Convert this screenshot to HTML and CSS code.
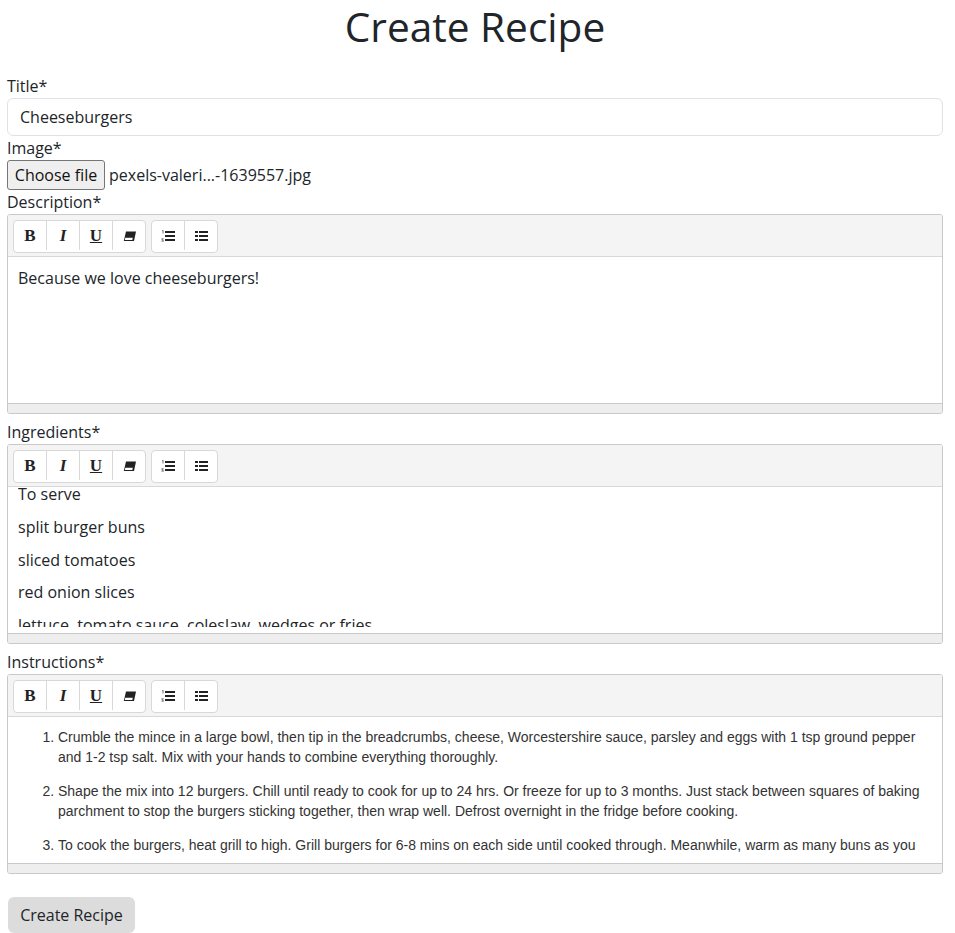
FILE: index.html
```html
<!DOCTYPE html>
<html>

<head>
    <title>Create Recipe</title>
    <link rel="stylesheet" href="styles.css">
</head>

<body>
    <h1>Create Recipe</h1>
    <form class="recipe-form">
        <label for="title">Title*</label>
        <input type="text" id="title" class="text-input" value="Cheeseburgers">

        <label>Image*</label>
        <div class="file-row">
            <button type="button" class="file-button">Choose file</button>
            <span class="file-name">pexels-valeri...-1639557.jpg</span>
        </div>

        <label>Description*</label>
        <div class="editor">
            <div class="toolbar">
                <div class="btn-group">
                    <button type="button" class="tool tool-b">B</button>
                    <button type="button" class="tool tool-i">I</button>
                    <button type="button" class="tool tool-u">U</button>
                    <button type="button" class="tool"><svg width="14" height="14" viewBox="0 0 14 14"><path d="M4 2.500h10L12 12H1.800z" fill="#222"/><path d="M3.300 8.700h7.500l-.5 2.300H2.800z" fill="#fff"/></svg></button>
                </div>
                <div class="btn-group">
                    <button type="button" class="tool"><svg width="14" height="14" viewBox="0 0 14 14"><path d="M4 2h10v2H4zM4 6h10v2H4zM4 10h10v2H4z" fill="#222"/><path d="M1.200 1h1.200v3.500H1.600V1.800H1.200zM.4 9.500h2.400v.7H1.300l1.500 1.500v.8H.4v-.7h1.400L.4 10.300z" fill="#555"/></svg></button>
                    <button type="button" class="tool"><svg width="14" height="14" viewBox="0 0 14 14"><path d="M5 2h9v2H5zM5 6h9v2H5zM5 10h9v2H5zM1 2h3v2H1zM1 6h3v2H1zM1 10h3v2H1z" fill="#222"/></svg></button>
                </div>
            </div>
            <div class="editor-body desc-body">
                <p>Because we love cheeseburgers!</p>
            </div>
            <div class="statusbar"></div>
        </div>

        <label>Ingredients*</label>
        <div class="editor">
            <div class="toolbar">
                <div class="btn-group">
                    <button type="button" class="tool tool-b">B</button>
                    <button type="button" class="tool tool-i">I</button>
                    <button type="button" class="tool tool-u">U</button>
                    <button type="button" class="tool"><svg width="14" height="14" viewBox="0 0 14 14"><path d="M4 2.500h10L12 12H1.800z" fill="#222"/><path d="M3.300 8.700h7.500l-.5 2.300H2.800z" fill="#fff"/></svg></button>
                </div>
                <div class="btn-group">
                    <button type="button" class="tool"><svg width="14" height="14" viewBox="0 0 14 14"><path d="M4 2h10v2H4zM4 6h10v2H4zM4 10h10v2H4z" fill="#222"/><path d="M1.200 1h1.200v3.500H1.600V1.800H1.200zM.4 9.500h2.400v.7H1.300l1.500 1.500v.8H.4v-.7h1.400L.4 10.300z" fill="#555"/></svg></button>
                    <button type="button" class="tool"><svg width="14" height="14" viewBox="0 0 14 14"><path d="M5 2h9v2H5zM5 6h9v2H5zM5 10h9v2H5zM1 2h3v2H1zM1 6h3v2H1zM1 10h3v2H1z" fill="#222"/></svg></button>
                </div>
            </div>
            <div class="editor-body ingredients-body">
                <div class="scroll-clip">
                    <div class="scrolled">
                        <p>To serve</p>
                        <p>split burger buns</p>
                        <p>sliced tomatoes</p>
                        <p>red onion slices</p>
                        <p>lettuce, tomato sauce, coleslaw, wedges or fries</p>
                    </div>
                </div>
            </div>
            <div class="statusbar"></div>
        </div>

        <label>Instructions*</label>
        <div class="editor">
            <div class="toolbar">
                <div class="btn-group">
                    <button type="button" class="tool tool-b">B</button>
                    <button type="button" class="tool tool-i">I</button>
                    <button type="button" class="tool tool-u">U</button>
                    <button type="button" class="tool"><svg width="14" height="14" viewBox="0 0 14 14"><path d="M4 2.500h10L12 12H1.800z" fill="#222"/><path d="M3.300 8.700h7.500l-.5 2.300H2.800z" fill="#fff"/></svg></button>
                </div>
                <div class="btn-group">
                    <button type="button" class="tool"><svg width="14" height="14" viewBox="0 0 14 14"><path d="M4 2h10v2H4zM4 6h10v2H4zM4 10h10v2H4z" fill="#222"/><path d="M1.200 1h1.200v3.500H1.600V1.800H1.200zM.4 9.500h2.400v.7H1.300l1.500 1.500v.8H.4v-.7h1.400L.4 10.300z" fill="#555"/></svg></button>
                    <button type="button" class="tool"><svg width="14" height="14" viewBox="0 0 14 14"><path d="M5 2h9v2H5zM5 6h9v2H5zM5 10h9v2H5zM1 2h3v2H1zM1 6h3v2H1zM1 10h3v2H1z" fill="#222"/></svg></button>
                </div>
            </div>
            <div class="editor-body steps-body">
                <ol>
                    <li>Crumble the mince in a large bowl, then tip in the breadcrumbs, cheese, Worcestershire sauce, parsley and eggs with 1 tsp ground pepper and 1-2 tsp salt. Mix with your hands to combine everything thoroughly.</li>
                    <li>Shape the mix into 12 burgers. Chill until ready to cook for up to 24 hrs. Or freeze for up to 3 months. Just stack between squares of baking parchment to stop the burgers sticking together, then wrap well. Defrost overnight in the fridge before cooking.</li>
                    <li>To cook the burgers, heat grill to high. Grill burgers for 6-8 mins on each side until cooked through. Meanwhile, warm as many buns as you need.</li>
                </ol>
            </div>
            <div class="statusbar"></div>
        </div>

        <button type="submit" class="submit-button">Create Recipe</button>
    </form>
</body>

</html>
```

FILE: styles.css
```css
html,
body {
    height: 933px;
    overflow: hidden;
}

body {
    margin: 0;
    padding: 0 12px 0 7px;
    font-family: "Open Sans", sans-serif;
    font-size: 16px;
    line-height: 24px;
    color: #212529;
    background-color: white;
}

h1 {
    margin: 0;
    height: 74px;
    padding-top: 3px;
    box-sizing: border-box;
    text-align: center;
    font-size: 40.6px;
    line-height: 48px;
    font-weight: 400;
}

label {
    display: block;
}

.text-input {
    display: block;
    box-sizing: border-box;
    width: 100%;
    height: 38px;
    padding: 6px 12px;
    border: 1px solid #dee2e6;
    border-radius: 6px;
    font: inherit;
    color: inherit;
}

.file-row {
    display: flex;
    align-items: center;
    gap: 4px;
    height: 30px;
}

.file-button {
    box-sizing: border-box;
    width: 98px;
    height: 30px;
    padding: 0;
    border: 1px solid #767676;
    border-radius: 3px;
    background-color: #efefef;
    font: inherit;
    color: #111;
}

.editor {
    box-sizing: border-box;
    height: 200px;
    margin-bottom: 6px;
    border: 1px solid #c9c9c9;
    border-radius: 3px;
    display: flex;
    flex-direction: column;
    overflow: hidden;
}

.toolbar {
    display: flex;
    gap: 5px;
    height: 42px;
    box-sizing: border-box;
    padding: 5px;
    background-color: #f4f4f4;
    border-bottom: 1px solid #d8d8d8;
}

.btn-group {
    display: flex;
    height: 31px;
    background-color: white;
    border: 1px solid #d8d8d8;
    border-radius: 4px;
}

.tool {
    display: flex;
    align-items: center;
    justify-content: center;
    width: 33px;
    height: 29px;
    padding: 0;
    border: none;
    border-right: 1px solid #d8d8d8;
    background: none;
    font-family: "Liberation Serif", serif;
    font-size: 17px;
    color: #222;
}

.tool:last-child {
    border-right: none;
    width: 32px;
}

.tool-b {
    font-weight: bold;
}

.tool-i {
    font-weight: bold;
    font-style: italic;
}

.tool-u {
    font-weight: bold;
    text-decoration: underline;
}

.editor-body {
    flex: 1;
    min-height: 0;
    overflow: hidden;
    background-color: white;
}

.editor-body p {
    margin: 0 0 8.8px;
}

.desc-body {
    padding: 9px 10px;
}

.ingredients-body {
    padding: 0 10px 6px;
}

.scroll-clip {
    height: 140px;
    overflow: hidden;
}

/* the real editor is scrolled down a little */
.scrolled {
    margin-top: -5px;
}

.scrolled p {
    height: 24px;
}

.steps-body {
    font-family: "Liberation Sans", Arial, sans-serif;
    font-size: 14px;
    line-height: 20px;
    color: #333;
    padding: 10px 22px 0 10px;
}

.steps-body ol {
    height: 128px;
    overflow: hidden;
    margin: 0;
    padding-left: 40px;
}

.steps-body li {
    margin-bottom: 14px;
}

.statusbar {
    box-sizing: border-box;
    height: 10px;
    background-color: #eeeeee;
    border-top: 1px solid #c9c9c9;
    flex: none;
}

.submit-button {
    display: block;
    width: 127px;
    height: 36px;
    margin: 23px 0 0 1px;
    padding: 0;
    border: none;
    border-radius: 6px;
    background-color: #dcdcdc;
    font: inherit;
    color: inherit;
}
```
